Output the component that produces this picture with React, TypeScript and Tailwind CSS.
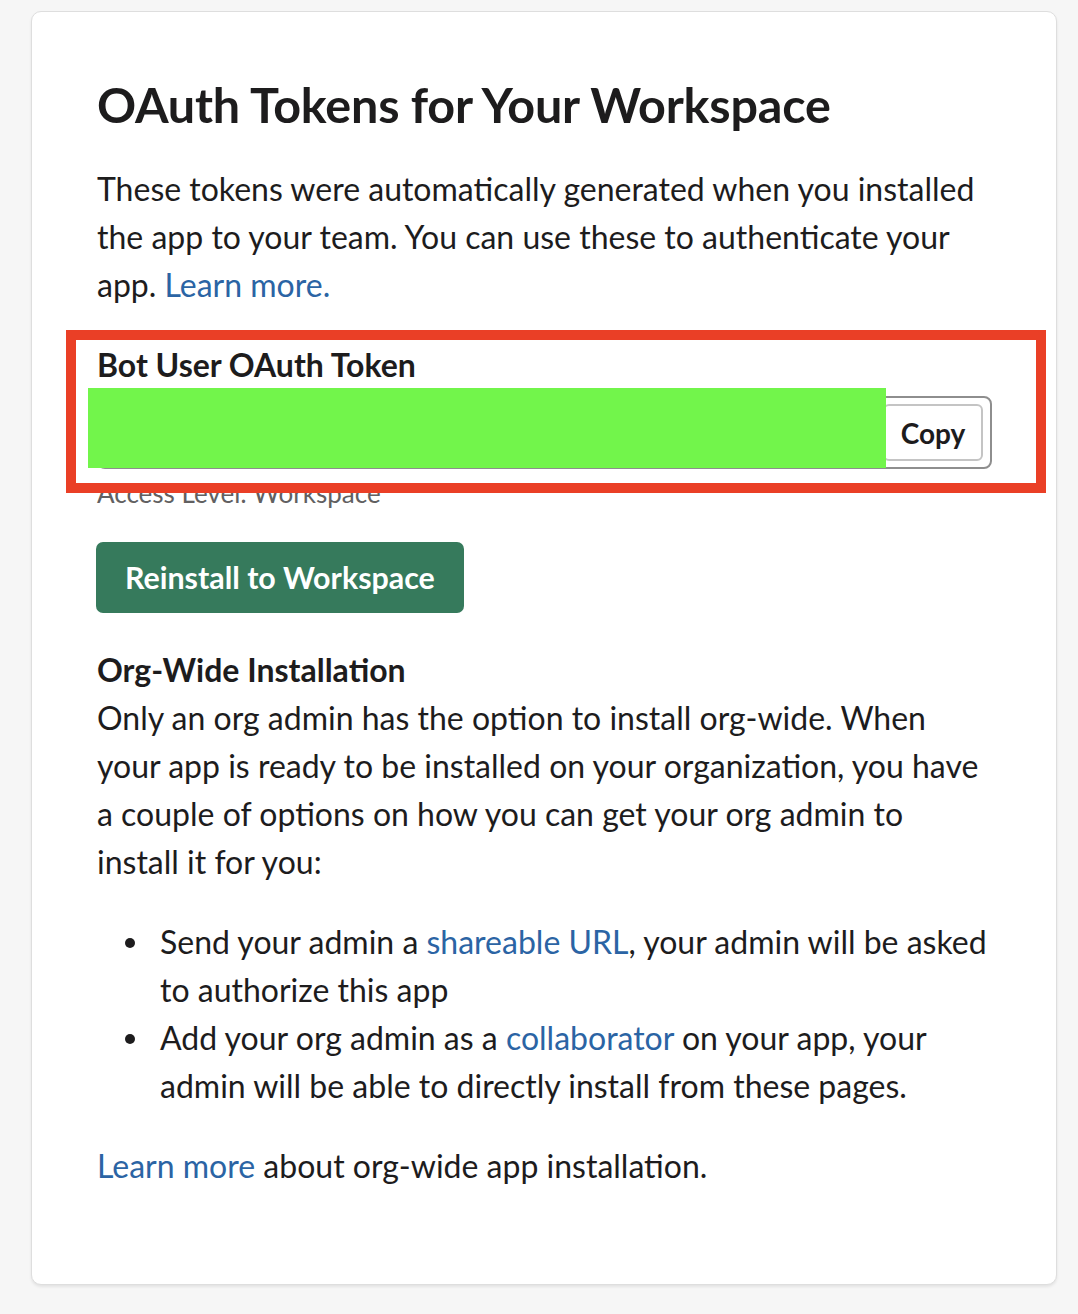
import React from 'react';

export default function App() {
  return (
    <div className="min-h-screen bg-[#f6f6f6] pt-[11px] pl-[31px] pr-[21px] pb-[28px] font-['Lato','Noto_Sans',sans-serif] text-[#1d1c1d]">
      <div className="bg-white rounded-[10px] border border-[#dedede] shadow-[0_2px_3px_rgba(0,0,0,0.08)] pl-[65px] pr-[67px] pt-[64px] pb-[94px]">
        <h2 className="text-[48.5px] leading-[56px] font-bold tracking-[-0.2px]">OAuth Tokens for Your Workspace</h2>

        <p className="mt-[33px] text-[32px] leading-[48px]">
          These tokens were automatically generated when you installed the app to your team. You can use these to authenticate your app.{' '}
          <a className="text-[#2b64a4]">Learn more.</a>
        </p>

        {/* Token block */}
        <div className="relative mt-[32px]">
          <div className="text-[32px] leading-[48px] font-bold">Bot User OAuth Token</div>
          <div className="mt-[7px] flex items-center justify-end w-[895px] h-[73px] border-2 border-[#8e8e8e] rounded-[8px] pr-[7px]">
            <button className="h-[57px] w-[100px] border-2 border-[#c4c4c4] rounded-[6px] bg-white text-[28px] font-bold text-[#1d1c1d]">Copy</button>
          </div>
          <div className="mt-[4px] text-[26px] leading-[40px] text-[#616061]">Access Level: Workspace</div>

          {/* redaction + annotation overlays */}
          <div className="absolute left-[-9px] top-[47px] w-[798px] h-[80px] bg-[#72f54b]" />
          <div className="absolute left-[-31px] top-[-11px] w-[980px] h-[163px] border-[10px] border-[#ea3f26]" />
        </div>

        <button className="mt-[29px] -ml-px h-[71px] px-[29px] rounded-[7px] bg-[#367a5c] text-white text-[30.4px] font-bold">Reinstall to Workspace</button>

        <div className="mt-[33px] text-[32px] leading-[48px] font-bold">Org-Wide Installation</div>
        <p className="text-[32px] leading-[48px]">
          Only an org admin has the option to install org-wide. When your app is ready to be installed on your organization, you have a couple of options on how you can get your org admin to install it for you:
        </p>

        <ul className="mt-[32px] pl-[63px] text-[32px] leading-[48px]">
          <li className="relative">
            <span className="absolute left-[-35px] top-[20px] w-[10px] h-[10px] rounded-full bg-[#1d1c1d]" />
            Send your admin a <a className="text-[#2b64a4]">shareable URL</a>, your admin will be asked to authorize this app
          </li>
          <li className="relative">
            <span className="absolute left-[-35px] top-[20px] w-[10px] h-[10px] rounded-full bg-[#1d1c1d]" />
            Add your org admin as a <a className="text-[#2b64a4]">collaborator</a> on your app, your admin will be able to directly install from these pages.
          </li>
        </ul>

        <p className="mt-[32px] text-[32px] leading-[48px]">
          <a className="text-[#2b64a4]">Learn more</a> about org-wide app installation.
        </p>
      </div>
    </div>
  );
}
